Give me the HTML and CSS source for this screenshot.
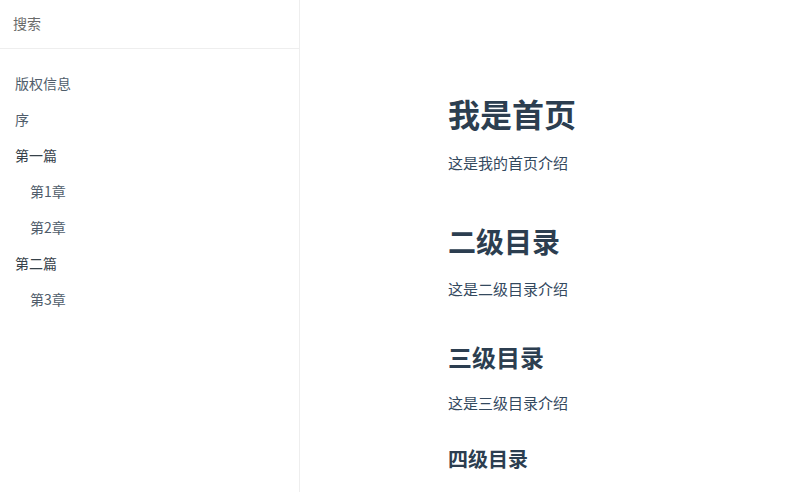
FILE: index.html
```html
<!DOCTYPE html>
<html lang="zh-CN">
<head>
<meta charset="utf-8">
<title>我是首页</title>
<link rel="stylesheet" href="styles.css">
</head>
<body>
<div class="app">
  <aside class="sidebar">
    <div class="search"><input class="search-input" type="search" placeholder="搜索"></div>
    <ul class="nav">
      <li class="link">版权信息</li>
      <li class="link">序</li>
      <li class="group">第一篇</li>
      <li class="link sub">第1章</li>
      <li class="link sub">第2章</li>
      <li class="group">第二篇</li>
      <li class="link sub">第3章</li>
    </ul>
  </aside>
  <main class="content">
    <article class="markdown">
      <h1 class="h1">我是首页</h1>
      <p class="p p1">这是我的首页介绍</p>
      <h2 class="h2">二级目录</h2>
      <p class="p p2">这是二级目录介绍</p>
      <h3 class="h3">三级目录</h3>
      <p class="p p3">这是三级目录介绍</p>
      <h4 class="h4">四级目录</h4>
    </article>
  </main>
</div>
</body>
</html>
```

FILE: styles.css
```css
html, body {
  margin: 0;
  padding: 0;
  height: 100%;
  overflow: hidden;
  background: #fff;
  font-family: "Noto Sans CJK SC", "Liberation Sans", sans-serif;
}
.app {
  display: flex;
  height: 100%;
}
.sidebar {
  width: 299px;
  flex: none;
  border-right: 1px solid #eee;
  height: 100%;
}
.search {
  height: 49px;
  box-sizing: border-box;
  padding-bottom: 3px;
  border-bottom: 1px solid #eee;
  display: flex;
  align-items: center;
}
.search-input {
  border: none;
  outline: none;
  background: transparent;
  margin: 0 0 0 13px;
  padding: 0;
  width: 260px;
  font-family: inherit;
  font-size: 14px;
  color: #666;
}
.search-input::placeholder {
  color: #6b6b6b;
}
.nav {
  list-style: none;
  margin: 0;
  padding: 17px 0 0 15px;
}
.nav li {
  height: 36px;
  line-height: 34px;
  font-size: 14px;
}
.link {
  color: #505d6b;
}
.group {
  color: #364149;
}
.sub {
  padding-left: 15px;
}
.content {
  flex: 1;
  padding: 93px 0 0 148px;
}
.markdown h1, .markdown h2, .markdown h3, .markdown h4 {
  color: #2c3e50;
  font-weight: 700;
  margin: 0;
}
.h1 { font-size: 32px; line-height: 40px; }
.h2 { font-size: 28px; line-height: 36px; margin-top: 47px !important; }
.h3 { font-size: 24px; line-height: 32px; margin-top: 40px !important; }
.h4 { font-size: 20px; line-height: 28px; margin-top: 29px !important; }
.p {
  margin: 17px 0 0;
  font-size: 15px;
  line-height: 25.6px;
  color: #34495e;
}
```
